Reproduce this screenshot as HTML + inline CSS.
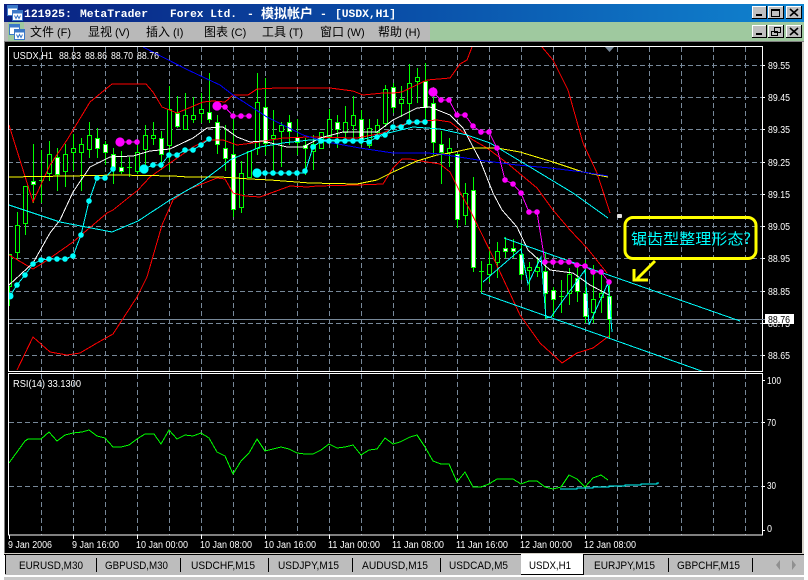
<!DOCTYPE html>
<html><head><meta charset="utf-8"><title>MetaTrader</title>
<style>
html,body{margin:0;padding:0;width:808px;height:580px;overflow:hidden;background:#fff}
svg{display:block;font-family:"Liberation Sans","Noto Sans CJK SC",sans-serif}
.l{fill:none;shape-rendering:crispEdges}
.p text{fill:#fff;font-size:10px}
.tab{fill:#000;font-size:11px}
.menu{fill:#000;font-size:12px}
.ttl{fill:#fff;font-family:"Liberation Mono","Noto Sans CJK SC",monospace;font-weight:bold;font-size:11.4px}
</style></head><body>
<svg width="808" height="580" viewBox="0 0 808 580" xmlns="http://www.w3.org/2000/svg">
<defs>
<linearGradient id="tg" x1="0" x2="1" y1="0" y2="0"><stop offset="0" stop-color="#0a2080"/><stop offset=".5" stop-color="#0a4fa8"/><stop offset="1" stop-color="#1084d0"/></linearGradient>
<clipPath id="cm"><rect x="9" y="47" width="753" height="325"/></clipPath>
<clipPath id="cr"><rect x="9" y="374" width="753" height="161"/></clipPath>
<g id="ic"><rect x="0" y="0" width="10" height="10" fill="#fff" stroke="#3a78c8"/><rect x="0" y="0" width="10" height="3" fill="#3a78c8"/><rect x="5" y="5" width="10" height="10" fill="#fff" stroke="#3a78c8"/><rect x="5" y="5" width="10" height="3" fill="#3a78c8"/><path d="M7 10l1.5 3 1.5-3 1.5 3 1.5-3" fill="none" stroke="#3a78c8"/></g>
</defs>

<rect width="808" height="580" fill="#fff"/>
<!-- title bar -->
<rect x="4" y="4" width="800" height="18" fill="url(#tg)"/>
<use href="#ic" x="7.5" y="5.5"/>
<g class="ttl">
<text x="24" y="17">121925:</text>
<text x="80" y="17" textLength="68" lengthAdjust="spacingAndGlyphs">MetaTrader</text>
<text x="170" y="17" textLength="67" lengthAdjust="spacingAndGlyphs">Forex Ltd.</text>
<text x="247" y="17">-</text>
<text x="261" y="18" font-size="13">模拟帐户</text>
<text x="320" y="17">-</text>
<text x="335" y="17" textLength="61" lengthAdjust="spacingAndGlyphs">[USDX,H1]</text>
</g>
<g shape-rendering="crispEdges">
<rect x="752" y="6" width="15" height="13" fill="#c0c0c0"/><path d="M752.5 19V6.5H767" stroke="#fff" fill="none"/><path d="M752 18.5H766.5V6" stroke="#000" fill="none"/><rect x="756" y="14" width="6" height="2"/>
<rect x="768" y="6" width="16" height="13" fill="#c0c0c0"/><path d="M768.5 19V6.5H784" stroke="#fff" fill="none"/><path d="M768 18.5H783.5V6" stroke="#000" fill="none"/><path d="M771.5 9.5h8v7h-8z" fill="none" stroke="#000"/><rect x="771" y="9" width="9" height="2"/>
<rect x="786" y="6" width="16" height="13" fill="#c0c0c0"/><path d="M786.5 19V6.5H802" stroke="#fff" fill="none"/><path d="M786 18.5H801.5V6" stroke="#000" fill="none"/>
</g>
<path d="M790 9l8 7M798 9l-8 7" stroke="#000" stroke-width="1.6"/>

<!-- menu bar -->
<rect x="4" y="22" width="800" height="19" fill="#b9b9b9"/>
<rect x="430" y="22" width="374" height="19" fill="#9fc99f"/>
<rect x="8" y="22" width="16" height="19" fill="#9fc99f"/>
<use href="#ic" x="9.5" y="24.5"/>
<g class="menu">
<text x="30" y="36">文件<tspan dx="3" font-size="11">(F)</tspan></text>
<text x="88" y="36">显视<tspan dx="3" font-size="11">(V)</tspan></text>
<text x="146" y="36">插入<tspan dx="3" font-size="11">(I)</tspan></text>
<text x="204" y="36">图表<tspan dx="3" font-size="11">(C)</tspan></text>
<text x="262" y="36">工具<tspan dx="3" font-size="11">(T)</tspan></text>
<text x="320" y="36">窗口<tspan dx="3" font-size="11">(W)</tspan></text>
<text x="378" y="36">帮助<tspan dx="3" font-size="11">(H)</tspan></text>
</g>
<g shape-rendering="crispEdges">
<rect x="752" y="25" width="15" height="13" fill="#c0c0c0"/><path d="M752.5 38V25.5H767" stroke="#fff" fill="none"/><path d="M752 37.5H766.5V25" stroke="#000" fill="none"/><rect x="756" y="33" width="6" height="2"/>
<rect x="768" y="25" width="16" height="13" fill="#c0c0c0"/><path d="M768.5 38V25.5H784" stroke="#fff" fill="none"/><path d="M768 37.5H783.5V25" stroke="#000" fill="none"/><path d="M774.5 27.5h6v5h-6zM771.5 31.5h6v4h-6z" fill="#c0c0c0" stroke="#000"/>
<rect x="786" y="25" width="16" height="13" fill="#c0c0c0"/><path d="M786.5 38V25.5H802" stroke="#fff" fill="none"/><path d="M786 37.5H801.5V25" stroke="#000" fill="none"/>
</g>
<path d="M790 28l8 7M798 28l-8 7" stroke="#000" stroke-width="1.6"/>

<!-- black client -->
<rect x="4" y="41" width="800" height="1" fill="#808080"/>
<rect x="4" y="42" width="1" height="512" fill="#808080"/>
<rect x="5" y="42" width="797" height="511" fill="#000"/>
<rect x="802" y="42" width="2" height="512" fill="#d4d0c8"/>

<!-- main chart -->
<g clip-path="url(#cm)">
<path class="l" stroke="#778899" stroke-dasharray="5 3" d="M0 65.5H762M0 97.5H762M0 129.5H762M0 162.5H762M0 194.5H762M0 226.5H762M0 258.5H762M0 291.5H762M0 323.5H762M0 355.5H762M41.5 47V372M73.5 47V372M105.5 47V372M137.5 47V372M169.5 47V372M201.5 47V372M233.5 47V372M265.5 47V372M297.5 47V372M329.5 47V372M361.5 47V372M393.5 47V372M425.5 47V372M457.5 47V372M489.5 47V372M521.5 47V372M553.5 47V372M585.5 47V372M617.5 47V372M649.5 47V372M681.5 47V372M713.5 47V372M745.5 47V372"/>
<rect x="9" y="319" width="753" height="1" fill="#778899"/>

<!-- wicks -->
<path class="l" stroke="#0f0" d="M9.5 254V306M17.5 212V260M25.5 186V235M33.5 144V203M41.5 150V203M49.5 141V181M57.5 148V191M65.5 144V187M73.5 134V171M81.5 138V191M89.5 122V158M97.5 128V158M105.5 141V165M113.5 148V184M121.5 151V174M129.5 157V177M137.5 145V174M145.5 125V165M153.5 122V145M161.5 131V170M169.5 86V170M177.5 96V128M185.5 93V129M193.5 97V123M201.5 93V123M209.5 73V123M217.5 115V154M225.5 125V171M233.5 113V217M241.5 161V213M249.5 151V177M257.5 73V155M265.5 78V155M273.5 110V172M281.5 122V167M289.5 115V145M297.5 119V155M305.5 138V175M313.5 135V170M321.5 132V148M329.5 109V140M337.5 115V148M345.5 106V140M353.5 96V138M361.5 110V145M369.5 119V148M377.5 119V140M385.5 85V127M393.5 83V113M401.5 86V117M409.5 64V122M417.5 68V103M425.5 63V125M433.5 87V155M441.5 131V184M449.5 138V167M457.5 154V228M465.5 183V225M473.5 177V272M481.5 261V293M489.5 247V282M497.5 242V278M505.5 237V258M513.5 239V258M521.5 243V280M529.5 262V291M537.5 257V277M545.5 253V319M553.5 287V317M561.5 280V313M569.5 268V305M577.5 265V302M585.5 260V323M593.5 265V323M601.5 273V313M609.5 282V338"/>
<!-- doji -->
<path class="l" stroke="#0f0" d="M39 180.5h5M127 167.5h5M479 271.5h5M559 296.5h5"/>
<!-- bull bodies -->
<path shape-rendering="crispEdges" fill="#000" stroke="#0f0" d="M7.5 254.5h4v32h-4zM15.5 225.5h4v27h-4zM23.5 186.5h4v37h-4zM47.5 154.5h4v19h-4zM63.5 154.5h4v17h-4zM71.5 148.5h4v4h-4zM79.5 144.5h4v8h-4zM87.5 135.5h4v14h-4zM135.5 152.5h4v19h-4zM143.5 135.5h4v14h-4zM151.5 135.5h4v3h-4zM167.5 109.5h4v36h-4zM183.5 115.5h4v14h-4zM191.5 115.5h4v4h-4zM199.5 109.5h4v4h-4zM239.5 173.5h4v34h-4zM247.5 151.5h4v26h-4zM255.5 102.5h4v46h-4zM271.5 135.5h4v3h-4zM279.5 125.5h4v6h-4zM311.5 144.5h4v7h-4zM319.5 132.5h4v16h-4zM327.5 119.5h4v17h-4zM343.5 122.5h4v10h-4zM351.5 115.5h4v10h-4zM367.5 128.5h4v17h-4zM375.5 125.5h4v7h-4zM383.5 89.5h4v34h-4zM399.5 99.5h4v4h-4zM407.5 83.5h4v20h-4zM415.5 77.5h4v4h-4zM447.5 148.5h4v4h-4zM463.5 193.5h4v22h-4zM487.5 264.5h4v10h-4zM495.5 251.5h4v11h-4zM527.5 267.5h4v3h-4zM535.5 267.5h4v4h-4zM567.5 274.5h4v19h-4zM591.5 299.5h4v13h-4zM599.5 293.5h4v4h-4z"/>
<!-- bear bodies -->
<path shape-rendering="crispEdges" fill="#fff" stroke="#0f0" d="M31.5 181.5h4v3h-4zM55.5 157.5h4v17h-4zM95.5 138.5h4v10h-4zM103.5 144.5h4v8h-4zM111.5 154.5h4v13h-4zM119.5 167.5h4v4h-4zM159.5 138.5h4v16h-4zM175.5 113.5h4v13h-4zM207.5 112.5h4v7h-4zM215.5 122.5h4v22h-4zM223.5 148.5h4v10h-4zM231.5 154.5h4v55h-4zM263.5 107.5h4v36h-4zM287.5 122.5h4v9h-4zM295.5 137.5h4v5h-4zM303.5 145.5h4v3h-4zM335.5 122.5h4v7h-4zM359.5 119.5h4v20h-4zM391.5 87.5h4v20h-4zM423.5 81.5h4v26h-4zM431.5 103.5h4v39h-4zM439.5 144.5h4v8h-4zM455.5 154.5h4v65h-4zM471.5 190.5h4v77h-4zM503.5 248.5h4v3h-4zM511.5 248.5h4v3h-4zM519.5 254.5h4v20h-4zM543.5 271.5h4v22h-4zM551.5 290.5h4v9h-4zM575.5 278.5h4v13h-4zM583.5 293.5h4v23h-4zM607.5 296.5h4v23h-4z"/>

<!-- bollinger red -->
<polyline class="l" stroke="#f00" points="9,125 33,202 50,165 67,140 90,102 112,84 146,84 153,92 162,107 177,113 203,102 213,101 225,102 233,95 248,95 257,89 277,88 330,88 353,91 363,95 383,93 393,93 402,92 427,80 450,78 460,64 467,60 472,47"/>
<polyline class="l" stroke="#f00" points="542,47 553,60 557,68 568,90 583,143 597,173 610,213"/>
<polyline class="l" stroke="#f00" points="9,255 33,269 43,263 73,242 107,213 113,210 138,190 150,177 170,163 193,147 207,140 223,140 237,145 253,143 283,138 310,137 357,138 383,133 400,125 423,121 437,120 450,122 473,140 487,148 507,163 537,188 553,210 570,230 587,248 607,273"/>
<polyline class="l" stroke="#f00" points="17,370 33,337 50,352 67,355 80,353 97,343 113,334 137,297 147,277 162,225 173,200 187,190 207,182 217,178 225,179 233,193 245,196 260,197 290,186 307,187 317,186 357,185 383,184 393,168 402,159 410,159 427,162 440,164 450,172 460,192 470,210 493,257 520,315 540,343 562,363 577,353 593,348 609,336"/>
<!-- white MA -->
<polyline class="l" stroke="#fff" points="9,285 33,263 50,233 60,220 73,192 90,167 110,157 133,156 150,151 170,149 193,138 207,128 223,127 237,137 250,142 263,141 287,147 303,147 320,138 343,132 377,132 393,120 417,108 430,107 440,111 450,115 463,128 480,160 493,193 502,210 517,227 528,250 550,270 573,273 590,285 609,295"/>
<!-- yellow -->
<polyline class="l" stroke="#ff0" points="9,177 68,176 117,175 173,176 188,177 220,177 250,179 270,180 310,183 357,184 377,180 393,172 417,161 437,155 450,153 473,148 497,148 520,152 553,162 583,172 608,177"/>
<!-- blue -->
<polyline class="l" stroke="#00f" points="143,47 188,70 220,85 233,95 267,117 303,135 327,142 360,148 393,153 427,153 440,154 478,160 517,165 550,168 583,172 608,176"/>
<!-- cyan MA -->
<polyline class="l" stroke="#0ff" points="9,205 60,222 112,232 138,221 170,200 200,183 220,168 230,160 260,147 283,143 310,140 360,140 380,135 413,127 440,129 467,135 490,143 530,167 573,193 608,218"/>
<!-- channel -->
<path class="l" stroke="#0ff" d="M504 238L600 272L740 321M481 293L600 335L710 374M483 282L521 249L528 284L541 257L546 318L551 317L585 270L589 325L608 283L612 332"/>

<!-- cyan dots -->
<g fill="#0ff" stroke="#0ff">
<polyline class="l" points="10,296 17,285 25,275 33,264 41,260 49,259 57,259 65,259 73,256 81,235 89,201 97,178 105,178 113,169"/>
<polyline class="l" points="144,169 153,165 161,165 169,155 177,155 185,150 193,150 201,145 209,139"/>
<polyline class="l" points="257,173 305,173 313,147 321,141 361,141 369,142 377,137 385,135 393,127 401,127 409,122 425,122"/>
</g>
<g fill="#0ff">
<circle cx="10" cy="296" r="3.5"/><circle cx="17" cy="285" r="2.8"/><circle cx="25" cy="275" r="2.8"/><circle cx="33" cy="264" r="2.8"/><circle cx="41" cy="260" r="2.8"/><circle cx="49" cy="259" r="2.8"/><circle cx="57" cy="259" r="2.8"/><circle cx="65" cy="259" r="2.8"/><circle cx="73" cy="256" r="2.8"/><circle cx="81" cy="235" r="2.8"/><circle cx="89" cy="201" r="2.8"/><circle cx="97" cy="178" r="2.8"/><circle cx="105" cy="178" r="2.8"/><circle cx="113" cy="169" r="2.8"/>
<circle cx="144" cy="169" r="4.6"/><circle cx="153" cy="165" r="2.8"/><circle cx="161" cy="165" r="2.8"/><circle cx="169" cy="155" r="2.8"/><circle cx="177" cy="155" r="2.8"/><circle cx="185" cy="150" r="2.8"/><circle cx="193" cy="150" r="2.8"/><circle cx="201" cy="145" r="2.8"/><circle cx="209" cy="139" r="2.8"/>
<circle cx="257" cy="173" r="4.6"/><circle cx="265" cy="173" r="2.8"/><circle cx="273" cy="173" r="2.8"/><circle cx="281" cy="173" r="2.8"/><circle cx="289" cy="173" r="2.8"/><circle cx="297" cy="173" r="2.8"/><circle cx="305" cy="171" r="2.8"/><circle cx="313" cy="147" r="2.8"/><circle cx="321" cy="141" r="2.8"/><circle cx="329" cy="141" r="2.8"/><circle cx="337" cy="141" r="2.8"/><circle cx="345" cy="141" r="2.8"/><circle cx="353" cy="141" r="2.8"/><circle cx="361" cy="141" r="2.8"/><circle cx="369" cy="142" r="2.8"/><circle cx="377" cy="137" r="2.8"/><circle cx="385" cy="135" r="2.8"/><circle cx="393" cy="127" r="2.8"/><circle cx="401" cy="127" r="2.8"/><circle cx="409" cy="122" r="2.8"/><circle cx="417" cy="122" r="2.8"/><circle cx="425" cy="122" r="2.8"/>
</g>
<!-- magenta dots -->
<polyline class="l" stroke="#f0f" points="120,142 137,142"/>
<polyline class="l" stroke="#f0f" points="217,106 225,107 233,116 249,116"/>
<polyline class="l" stroke="#f0f" points="433,92 441,100 449,100 457,115 465,115 473,126 481,132 489,132 497,148 505,180 513,184 521,193 529,212 537,212 545,262 569,262 577,265 585,266 593,272 601,272 609,282"/>
<g fill="#f0f">
<circle cx="120" cy="142" r="4.6"/><circle cx="129" cy="142" r="2.8"/><circle cx="137" cy="142" r="2.8"/>
<circle cx="217" cy="106" r="4.6"/><circle cx="225" cy="107" r="2.8"/><circle cx="233" cy="116" r="2.8"/><circle cx="241" cy="116" r="2.8"/><circle cx="249" cy="116" r="2.8"/>
<circle cx="433" cy="92" r="4.6"/><circle cx="441" cy="100" r="2.8"/><circle cx="449" cy="100" r="2.8"/><circle cx="457" cy="115" r="2.8"/><circle cx="465" cy="115" r="2.8"/><circle cx="473" cy="126" r="2.8"/><circle cx="481" cy="132" r="2.8"/><circle cx="489" cy="132" r="2.8"/><circle cx="497" cy="148" r="2.8"/><circle cx="505" cy="180" r="2.8"/><circle cx="513" cy="184" r="2.8"/><circle cx="521" cy="193" r="2.8"/><circle cx="529" cy="212" r="2.8"/><circle cx="537" cy="212" r="2.8"/><circle cx="545" cy="262" r="2.8"/><circle cx="553" cy="262" r="2.8"/><circle cx="561" cy="262" r="2.8"/><circle cx="569" cy="262" r="2.8"/><circle cx="577" cy="265" r="2.8"/><circle cx="585" cy="266" r="2.8"/><circle cx="593" cy="272" r="2.8"/><circle cx="601" cy="272" r="2.8"/><circle cx="609" cy="282" r="2.8"/>
</g>
<rect x="617" y="214" width="5" height="4" rx="1" fill="#e0e0e0"/>
<path d="M605 47h9l-4.5 5z" fill="#778899"/>
<!-- callout -->
<rect x="625" y="217.5" width="131" height="41" rx="8" fill="none" stroke="#ff0" stroke-width="3"/>
<text x="631" y="244" font-size="15" fill="#0ff" textLength="120" lengthAdjust="spacingAndGlyphs" font-family="'Noto Sans CJK SC',sans-serif">锯齿型整理形态?</text>
<path d="M655 261L637 279M634 269V280H648" fill="none" stroke="#ff0" stroke-width="3"/>
</g>

<!-- main frame -->
<rect x="8.5" y="46.5" width="754" height="325" fill="none" stroke="#fff" shape-rendering="crispEdges"/>

<!-- legend + axis -->
<g class="p">
<text x="13" y="59" textLength="40" lengthAdjust="spacingAndGlyphs">USDX,H1</text>
<text x="59" y="59" textLength="22" lengthAdjust="spacingAndGlyphs">88.83</text><text x="85" y="59" textLength="22" lengthAdjust="spacingAndGlyphs">88.86</text><text x="111" y="59" textLength="22" lengthAdjust="spacingAndGlyphs">88.70</text><text x="137" y="59" textLength="22" lengthAdjust="spacingAndGlyphs">88.76</text>
<text x="768" y="69" textLength="22" lengthAdjust="spacingAndGlyphs">89.55</text><text x="768" y="101" textLength="22" lengthAdjust="spacingAndGlyphs">89.45</text><text x="768" y="133" textLength="22" lengthAdjust="spacingAndGlyphs">89.35</text><text x="768" y="166" textLength="22" lengthAdjust="spacingAndGlyphs">89.25</text><text x="768" y="198" textLength="22" lengthAdjust="spacingAndGlyphs">89.15</text><text x="768" y="230" textLength="22" lengthAdjust="spacingAndGlyphs">89.05</text><text x="768" y="262" textLength="22" lengthAdjust="spacingAndGlyphs">88.95</text><text x="768" y="295" textLength="22" lengthAdjust="spacingAndGlyphs">88.85</text><text x="768" y="327" textLength="22" lengthAdjust="spacingAndGlyphs">88.75</text><text x="768" y="359" textLength="22" lengthAdjust="spacingAndGlyphs">88.65</text>
<text x="13" y="387" textLength="68" lengthAdjust="spacingAndGlyphs">RSI(14) 33.1300</text>
<text x="767" y="384" textLength="14" lengthAdjust="spacingAndGlyphs">100</text><text x="767" y="426" textLength="9" lengthAdjust="spacingAndGlyphs">70</text><text x="767" y="489" textLength="9" lengthAdjust="spacingAndGlyphs">30</text><text x="767" y="532" textLength="5" lengthAdjust="spacingAndGlyphs">0</text>
<text x="8" y="548" textLength="44" lengthAdjust="spacingAndGlyphs">9 Jan 2006</text><text x="72" y="548" textLength="47" lengthAdjust="spacingAndGlyphs">9 Jan 16:00</text><text x="136" y="548" textLength="52" lengthAdjust="spacingAndGlyphs">10 Jan 00:00</text><text x="200" y="548" textLength="52" lengthAdjust="spacingAndGlyphs">10 Jan 08:00</text><text x="264" y="548" textLength="52" lengthAdjust="spacingAndGlyphs">10 Jan 16:00</text><text x="328" y="548" textLength="52" lengthAdjust="spacingAndGlyphs">11 Jan 00:00</text><text x="392" y="548" textLength="52" lengthAdjust="spacingAndGlyphs">11 Jan 08:00</text><text x="456" y="548" textLength="52" lengthAdjust="spacingAndGlyphs">11 Jan 16:00</text><text x="520" y="548" textLength="52" lengthAdjust="spacingAndGlyphs">12 Jan 00:00</text><text x="584" y="548" textLength="52" lengthAdjust="spacingAndGlyphs">12 Jan 08:00</text>
</g>
<path class="l" stroke="#fff" d="M762 65.5h3M762 97.5h3M762 129.5h3M762 162.5h3M762 194.5h3M762 226.5h3M762 258.5h3M762 291.5h3M762 323.5h3M762 355.5h3M762 380.5h3M762 422.5h3M762 486.5h3M762 530.5h3M9.5 535V539M73.5 535V539M137.5 535V539M201.5 535V539M265.5 535V539M329.5 535V539M393.5 535V539M457.5 535V539M521.5 535V539M585.5 535V539"/>
<rect x="765" y="314" width="29" height="10" fill="#fff"/>
<text x="768" y="323" font-size="10" fill="#000" textLength="22" lengthAdjust="spacingAndGlyphs">88.76</text>
<rect x="762" y="319" width="3" height="1" fill="#778899"/>

<!-- RSI panel -->
<g clip-path="url(#cr)">
<path class="l" stroke="#778899" stroke-dasharray="5 3" d="M9 422.5H762M9 486.5H762M41.5 374V535M73.5 374V535M105.5 374V535M137.5 374V535M169.5 374V535M201.5 374V535M233.5 374V535M265.5 374V535M297.5 374V535M329.5 374V535M361.5 374V535M393.5 374V535M425.5 374V535M457.5 374V535M489.5 374V535M521.5 374V535M553.5 374V535M585.5 374V535M617.5 374V535M649.5 374V535M681.5 374V535M713.5 374V535M745.5 374V535"/>
<polyline class="l" stroke="#0f0" points="9,463 25,441 28,439 41,439 49,432 57,441 65,435 73,433 82,432 89,430 97,436 105,438 113,447 121,447 129,445 137,439 145,434 154,434 161,444 169,430 177,439 185,435 193,436 201,433 209,438 217,452 225,456 233,474 241,461 249,453 257,439 265,451 273,449 281,447 289,449 297,453 305,454 313,454 321,450 329,444 337,448 345,447 353,445 361,455 369,450 377,449 385,438 393,444 400,442 410,437 417,435 425,447 433,461 441,464 449,464 457,482 465,472 473,487 481,487 489,484 497,479 513,479 521,484 529,481 537,481 545,487 553,489 561,487 569,475 577,479 585,487 593,478 601,475 608,480"/>
<path class="l" stroke="#0ff" stroke-width="1" d="M560 489h17v-1h16v-1h16v-1h16v-1h16v-1h16v-1h2"/>
</g>
<rect x="8.5" y="373.5" width="754" height="161.5" fill="none" stroke="#fff" shape-rendering="crispEdges"/>

<!-- tab bar -->
<rect x="4" y="553" width="800" height="1" fill="#d4d0c8"/>
<rect x="4" y="554" width="800" height="1" fill="#000"/>
<rect x="5" y="555" width="799" height="20" fill="#bdbdbd"/>
<rect x="5" y="555" width="1" height="19" fill="#000"/>
<rect x="521" y="554" width="62" height="20" fill="#fff"/>
<path class="l" stroke="#000" d="M521 574.5H583.5V555"/>
<path class="l" stroke="#000" d="M96.5 558V572M180.5 558V572M268.5 558V572M352.5 558V572M440.5 558V572M668.5 558V572M752.5 558V572"/>
<g class="tab">
<text x="19" y="569" textLength="64" lengthAdjust="spacingAndGlyphs">EURUSD,M30</text>
<text x="105" y="569" textLength="63" lengthAdjust="spacingAndGlyphs">GBPUSD,M30</text>
<text x="191" y="569" textLength="64" lengthAdjust="spacingAndGlyphs">USDCHF,M15</text>
<text x="278" y="569" textLength="61" lengthAdjust="spacingAndGlyphs">USDJPY,M15</text>
<text x="362" y="569" textLength="66" lengthAdjust="spacingAndGlyphs">AUDUSD,M15</text>
<text x="449" y="569" textLength="59" lengthAdjust="spacingAndGlyphs">USDCAD,M5</text>
<text x="529" y="569" textLength="42" lengthAdjust="spacingAndGlyphs">USDX,H1</text>
<text x="594" y="569" textLength="61" lengthAdjust="spacingAndGlyphs">EURJPY,M15</text>
<text x="677" y="569" textLength="63" lengthAdjust="spacingAndGlyphs">GBPCHF,M15</text>
</g>
<path d="M780 560v10l-4-5zM792 560v10l4-5z" fill="#909090"/>
<rect x="4" y="577" width="800" height="3" fill="#c8c8c8"/>
</svg>
</body></html>
